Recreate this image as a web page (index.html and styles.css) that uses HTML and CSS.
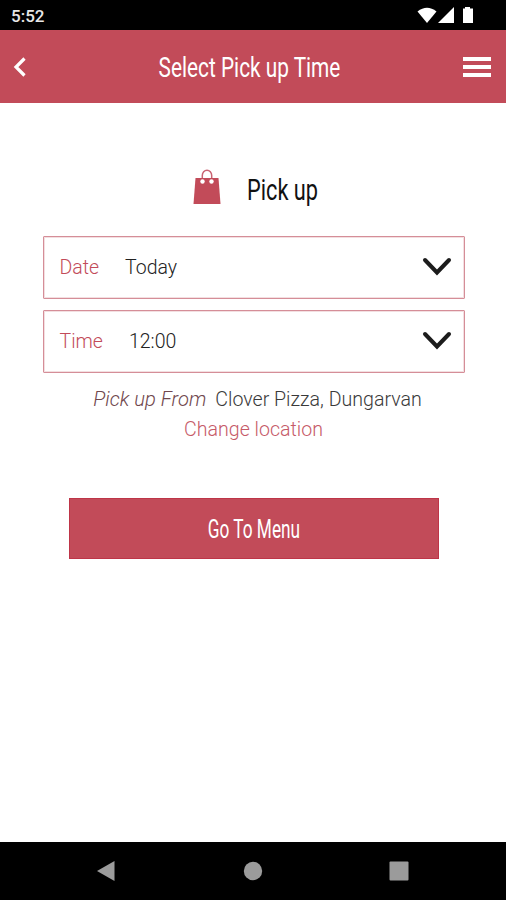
FILE: index.html
```html
<!DOCTYPE html>
<html lang="en">
<head>
  <meta charset="UTF-8">
  <meta name="viewport" content="width=device-width, initial-scale=1.0">
  <title>Select Pick up Time</title>
  <link rel="stylesheet" href="styles.css">
</head>
<body>
  <!-- Status bar -->
  <div class="status-bar">
    <span class="clock">5:52</span>
    <svg class="status-icons" width="58" height="18" viewBox="0 0 58 18" fill="#fff">
      <path d="M0.500 5.500Q10 -2 19.500 5.500L10 17Z"/>
      <path d="M21 17L37 1V17Z"/>
      <path d="M48 1h5v1.500h3V17H46V2.500h2Z"/>
    </svg>
  </div>

  <header class="header">
    <svg class="back" width="14" height="22" viewBox="0 0 14 22">
      <path d="M12.500 2.500L4 11L12.500 19.500" fill="none" stroke="#fff" stroke-width="3.200"/>
    </svg>
    <h1 class="title"><span class="condensed">Select Pick up Time</span></h1>
    <div class="menu">
      <span></span>
      <span></span>
      <span></span>
    </div>
  </header>

  <main class="content">
    <h2 class="pickup">
      <svg width="28" height="36" viewBox="0 0 28 36">
        <path d="M9.300 13V6.500a4.700 5.200 0 0 1 9.400 0V13" fill="none" stroke="#c96473" stroke-width="1.500"/>
        <path d="M2.500 9H25.500L27.500 35H0.500Z" fill="#c24b59"/>
        <circle cx="9.500" cy="12.500" r="2.200" fill="#fff"/>
        <circle cx="18.500" cy="12.500" r="2.200" fill="#fff"/>
      </svg>
      <span class="condensed">Pick up</span>
    </h2>

    <div class="field">
      <span class="label">Date</span>
      <span class="value">Today</span>
      <svg class="chevron" width="30" height="20" viewBox="0 0 30 20">
        <path d="M3 3L15 15.500L27 3" fill="none" stroke="#1c1c1c" stroke-width="4" stroke-linecap="round"/>
      </svg>
    </div>
    <div class="field">
      <span class="label">Time</span>
      <span class="value">12:00</span>
      <svg class="chevron" width="30" height="20" viewBox="0 0 30 20">
        <path d="M3 3L15 15.500L27 3" fill="none" stroke="#1c1c1c" stroke-width="4" stroke-linecap="round"/>
      </svg>
    </div>

    <p class="location"><em>Pick up From</em><span>Clover Pizza, Dungarvan</span></p>
    <a href="#" class="change">Change location</a>

    <button class="go-button"><span class="condensed">Go To Menu</span></button>
  </main>

  <!-- Android navigation -->
  <nav class="nav-bar">
    <svg width="20" height="22" viewBox="0 0 20 22"><path d="M1 11L18.500 1V21Z" fill="#9b9b9b"/></svg>
    <svg width="20" height="20" viewBox="0 0 20 20"><circle cx="10" cy="10" r="9.200" fill="#9b9b9b"/></svg>
    <svg width="20" height="20" viewBox="0 0 20 20"><rect x="0.500" y="0.500" width="19" height="19" rx="1" fill="#9b9b9b"/></svg>
  </nav>
</body>
</html>
```

FILE: styles.css
```css
* {
  box-sizing: border-box;
}

body {
  margin: 0;
  height: 100vh;
  display: flex;
  flex-direction: column;
  background: #fff;
  font-family: Roboto, "Liberation Sans", sans-serif;
  color: #222;
}

.status-bar {
  height: 30px;
  padding: 0 31px 0 11px;
  display: flex;
  align-items: center;
  justify-content: space-between;
  background: #000;
  color: #e8e8e8;
}

.clock {
  font-size: 17px;
  font-weight: 500;
  padding-top: 2px;
}

.header {
  height: 73px;
  padding: 0 15px 0 12px;
  display: grid;
  grid-template-columns: 28px 1fr 28px;
  align-items: center;
  background: #c24b59;
  color: #fff;
}

/* squeezes the headings to a narrow face */
.condensed {
  display: inline-block;
  white-space: nowrap;
  transform: scaleX(0.73);
}

.title {
  margin: 0;
  padding: 3px 5px 0 0;
  display: flex;
  justify-content: center;
  font-size: 28.5px;
  font-weight: 450;
  line-height: 36px;
}

.menu {
  display: flex;
  flex-direction: column;
  gap: 4px;
}

.menu span {
  height: 4px;
  background: #fff;
}

.content {
  flex: 1;
  display: flex;
  flex-direction: column;
  align-items: center;
  padding: 66px 0 0 1px;
}

.pickup {
  margin: 0 0 26px 192px;
  width: 122px;
  height: 41px;
  align-self: flex-start;
  display: flex;
  gap: 26px;
  font-size: 29px;
  font-weight: 400;
  line-height: 37px;
  color: #111;
}

.pickup svg {
  flex: none;
}

.pickup .condensed {
  transform: scaleX(0.75);
  transform-origin: left;
  padding-top: 3px;
}

.field {
  width: 422px;
  height: 63px;
  margin-bottom: 11px;
  padding: 0 12px 0 16px;
  display: flex;
  align-items: center;
  border: 1px solid #d58e98;
  border-radius: 1px;
  box-shadow: inset 0 0 0 1px #f3dfe1;
  font-size: 19.5px;
  font-weight: 350;
}

.label {
  margin-right: 26px;
  color: #c24b59;
}

.chevron {
  margin-left: auto;
  margin-bottom: 2px;
}

.location {
  margin: 0 0 0 8px;
  font-size: 19.6px;
  font-weight: 300;
  line-height: 30px;
  color: #3a3a3a;
}

.location em {
  margin-right: 9px;
  font-size: 20.2px;
  color: #70474d;
}

.change {
  font-size: 19.6px;
  font-weight: 300;
  line-height: 30px;
  color: #c65a68;
  text-decoration: none;
}

.go-button {
  width: 370px;
  height: 61px;
  margin-top: 53px;
  padding-top: 2px;
  border: 1px solid #be3548;
  background: #c24b59;
  color: #fff;
  font-family: inherit;
  font-size: 25px;
}

.go-button .condensed {
  transform: scaleX(0.69);
}

.nav-bar {
  height: 58px;
  padding: 0 97px 0 96px;
  display: flex;
  align-items: center;
  justify-content: space-between;
  background: #000;
}
```
